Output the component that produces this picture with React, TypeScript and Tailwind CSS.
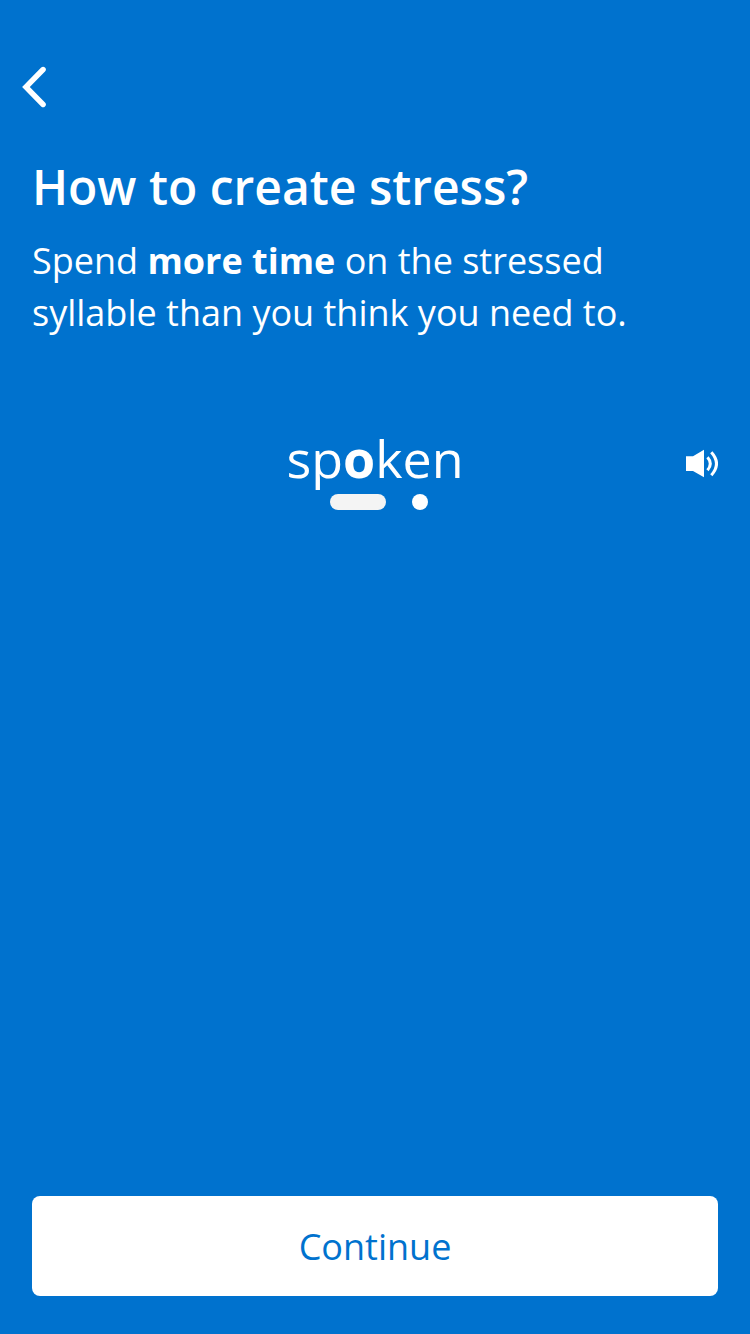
export default function App() {
  return (
    <main className="flex h-[1334px] w-[750px] flex-col bg-[#0072ce] px-8 pt-[66px] pb-[38px] font-['Open_Sans','Noto_Sans',sans-serif] text-white">
      <button aria-label="Back" className="-ml-3 h-[42px] w-[30px]">
        <svg viewBox="0 0 30 42" className="h-[42px] w-[30px]" fill="none" stroke="currentColor" strokeWidth="5.4" strokeLinecap="round" strokeLinejoin="miter">
          <path d="M23.1 3.5 5.9 21l17.2 17.5" />
        </svg>
      </button>
      <h1 className="mt-[46px] text-[48px] leading-[65px] font-semibold">How to create stress?</h1>
      <p className="mt-4 text-[36px] leading-[52px]">
        Spend <b className="font-bold">more time</b> on the stressed
        <br />
        syllable than you think you need to.
      </p>
      <section className="mt-[83px] grid grid-cols-[1fr_auto_1fr]">
        <div className="col-start-2">
          <div className="text-[52px] leading-[71px]">
            sp<b className="font-bold">o</b>ken
          </div>
          <div className="mt-px ml-[44px] flex gap-[26px]">
            <span className="h-4 w-14 rounded-full bg-[#f4f4f4]" />
            <span className="size-4 rounded-full bg-white" />
          </div>
        </div>
        <button aria-label="Play pronunciation" className="mt-[27px] h-[30px] w-[34px] justify-self-end">
          <svg viewBox="0 0 34 30" className="h-[30px] w-[34px]" fill="none" stroke="currentColor" strokeWidth="3">
            <path d="M2 7.2h7L20 .8v27.4L9 22H2z" fill="currentColor" stroke="none" />
            <path d="M23.5 8.2q5.6 6.4 0 13M27.3 3.2q10.4 11.5 0 23" />
          </svg>
        </button>
      </section>
      <button className="mt-auto h-[100px] shrink-0 rounded-lg bg-white pt-0.5 text-[36px] text-[#0072ce]">Continue</button>
    </main>
  );
}
